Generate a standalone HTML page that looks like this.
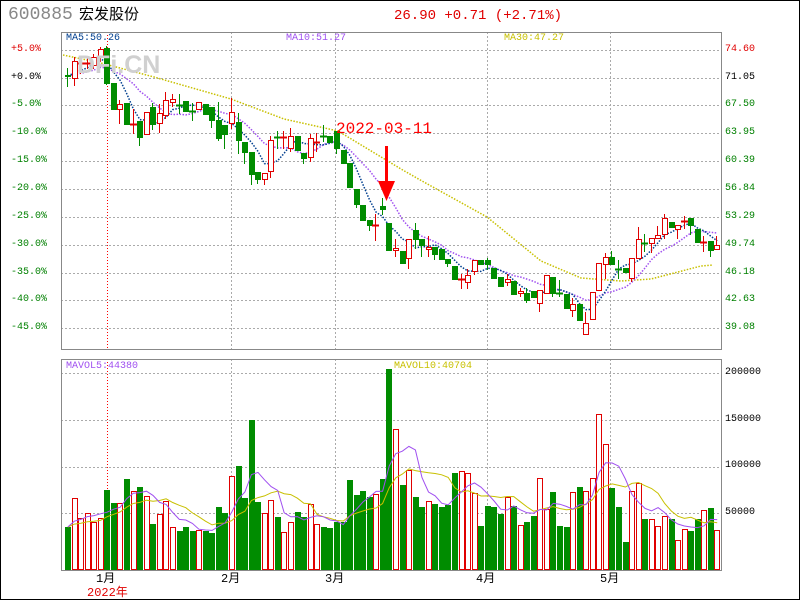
<!DOCTYPE html>
<html><head><meta charset="utf-8"><style>
html,body{margin:0;padding:0;background:#fff;}
#w{position:relative;width:798px;height:598px;border:1px solid #000;overflow:hidden;}
.t{position:absolute;white-space:nowrap;font-family:"Liberation Mono","Noto Sans CJK SC",monospace;font-size:10px;line-height:12px;}
svg{position:absolute;left:0;top:0;}
</style></head><body><div id="w">
<svg id="s" width="800" height="600" shape-rendering="crispEdges"></svg>
<div class="t" style="left:7px;top:3px;font-size:18px;line-height:22px;color:#888">600885</div>
<div class="t" style="left:78px;top:4px;font-size:15px;line-height:20px;color:#000;font-family:'Liberation Sans','Noto Sans CJK SC',sans-serif">宏发股份</div>
<div class="t" style="left:393px;top:6px;font-size:14px;line-height:18px;color:#e00000">26.90 +0.71 (+2.71%)</div>
<div class="t" style="left:65px;top:32px;color:#003f8f">MA5:50.26</div>
<div class="t" style="left:285px;top:32px;color:#a050f0">MA10:51.27</div>
<div class="t" style="left:503px;top:32px;color:#c8c000">MA30:47.27</div>
<div class="t" style="left:76px;top:50px;font-size:25px;line-height:28px;font-weight:bold;color:#d0d0d0;font-family:'Liberation Sans',sans-serif">DFi.CN</div>
<div class="t" style="left:335px;top:118px;font-size:16px;line-height:20px;color:#ff0000">2022-03-11</div>
<div class="t" style="left:65px;top:360px;color:#a050f0">MAVOL5:44380</div>
<div class="t" style="left:393px;top:360px;color:#c8c000">MAVOL10:40704</div>
<div class="t" style="left:95px;top:571px;font-size:12px;line-height:14px">1月</div>
<div class="t" style="left:220px;top:571px;font-size:12px;line-height:14px">2月</div>
<div class="t" style="left:324px;top:571px;font-size:12px;line-height:14px">3月</div>
<div class="t" style="left:475px;top:571px;font-size:12px;line-height:14px">4月</div>
<div class="t" style="left:599px;top:571px;font-size:12px;line-height:14px">5月</div>
<div class="t" style="left:86px;top:585px;font-size:12px;line-height:14px;color:#e00000">2022年</div>
<div class="t" style="left:10px;top:43px;color:#e00000">+5.0%</div>
<div class="t" style="left:10px;top:71px;color:#000">+0.0%</div>
<div class="t" style="left:10px;top:98px;color:#008000">-5.0%</div>
<div class="t" style="left:10px;top:126px;color:#008000">-10.0%</div>
<div class="t" style="left:10px;top:154px;color:#008000">-15.0%</div>
<div class="t" style="left:10px;top:182px;color:#008000">-20.0%</div>
<div class="t" style="left:10px;top:210px;color:#008000">-25.0%</div>
<div class="t" style="left:10px;top:238px;color:#008000">-30.0%</div>
<div class="t" style="left:10px;top:266px;color:#008000">-35.0%</div>
<div class="t" style="left:10px;top:293px;color:#008000">-40.0%</div>
<div class="t" style="left:10px;top:321px;color:#008000">-45.0%</div>
<div class="t" style="left:724px;top:43px;color:#e00000">74.60</div>
<div class="t" style="left:724px;top:71px;color:#000">71.05</div>
<div class="t" style="left:724px;top:98px;color:#008000">67.50</div>
<div class="t" style="left:724px;top:126px;color:#008000">63.95</div>
<div class="t" style="left:724px;top:154px;color:#008000">60.39</div>
<div class="t" style="left:724px;top:182px;color:#008000">56.84</div>
<div class="t" style="left:724px;top:210px;color:#008000">53.29</div>
<div class="t" style="left:724px;top:238px;color:#008000">49.74</div>
<div class="t" style="left:724px;top:266px;color:#008000">46.18</div>
<div class="t" style="left:724px;top:293px;color:#008000">42.63</div>
<div class="t" style="left:724px;top:321px;color:#008000">39.08</div>
<div class="t" style="left:724px;top:366px;color:#000">200000</div>
<div class="t" style="left:724px;top:413px;color:#000">150000</div>
<div class="t" style="left:724px;top:459px;color:#000">100000</div>
<div class="t" style="left:724px;top:506px;color:#000">50000</div>
</div>
<script>
var s=document.getElementById('s'),NS='http://www.w3.org/2000/svg';
function el(n,a){var e=document.createElementNS(NS,n);for(var k in a)e.setAttribute(k,a[k]);s.appendChild(e);return e;}
var G='#008c00',R='#e00000';
[49,77,104,132,160,188,216,244,272,299,327].forEach(function(y){el('line',{x1:60,x2:720,y1:y+.5,y2:y+.5,stroke:'#aaa','stroke-dasharray':'2,2'})});
[372,419,466,512].forEach(function(y){el('line',{x1:60,x2:720,y1:y+.5,y2:y+.5,stroke:'#aaa','stroke-dasharray':'2,2'})});
[230,334,486,609].forEach(function(x){el('line',{x1:x+.5,x2:x+.5,y1:31,y2:348,stroke:'#aaa','stroke-dasharray':'2,2'});el('line',{x1:x+.5,x2:x+.5,y1:358,y2:569,stroke:'#aaa','stroke-dasharray':'2,2'})});
el('line',{x1:106.5,x2:106.5,y1:31,y2:348,stroke:'#f00','stroke-dasharray':'1,2'});
el('line',{x1:106.5,x2:106.5,y1:358,y2:489,stroke:'#f00','stroke-dasharray':'1,2'});
el('rect',{x:60.5,y:31.5,width:660,height:317,fill:'none',stroke:'#888'});
el('rect',{x:60.5,y:358.5,width:660,height:211,fill:'none',stroke:'#888'});
var C=[['g',74,75,67,85],['r',60,77,56,84],['r',62,62,55,72],['r',62,62,56,67],['r',56,64,53,67],['r',48,55,46,60],['g',47,82,45,83],['g',82,108],['r',103,108,99,122],['g',102,123],['r',123,123,108,132],['g',120,136,120,144],['r',111,133],['g',106,123,102,128],['r',112,122,103,131],['r',99,114,91,117],['r',98,101,93,105],['g',104,104,93,112],['g',100,110],['g',110,110,102,119],['r',101,108],['g',103,113],['g',106,119,106,126],['g',119,137,101,139],['g',124,133,124,147],['r',111,122,97,127],['g',121,139,112,152],['g',141,151,141,162],['g',151,173,151,183],['g',171,178,171,182],['r',172,178,172,183],['r',139,170,135,176],['g',136,136,130,147],['r',136,136,130,147],['r',135,147,127,150],['g',135,149],['g',152,157,152,162],['r',137,156,133,160],['r',141,141,132,150],['g',135,135,124,140],['g',135,141],['g',130,147,130,152],['g',149,162],['g',162,186],['g',188,203,188,206],['g',204,219],['g',219,224,219,229],['r',224,224,213,239],['g',205,208,197,213],['g',222,249],['r',247,249,238,255],['g',250,262],['r',238,257,238,267],['g',229,238,222,247],['g',238,244,238,255],['r',246,248,235,255],['g',246,253,246,258],['g',248,258],['g',258,262,258,265],['g',265,278],['r',278,278,273,287],['r',274,281,268,287],['r',259,270,259,273],['g',259,263],['g',259,263,257,268],['g',267,277],['g',276,285],['r',278,281,273,284],['g',280,293],['r',290,292,287,295],['g',292,299,287,301],['g',290,296],['r',289,302,289,310],['r',274,292],['g',276,292,276,295],['g',292,292,279,295],['g',293,307],['r',303,309,297,315],['g',303,319],['r',322,333,311,333],['r',291,318],['r',262,289],['r',256,263,252,277],['g',256,263,250,263],['g',268,268,259,277],['g',267,271],['r',257,277,257,280],['r',238,257,226,257],['g',242,242,233,250],['r',237,242,237,251],['r',234,237,225,237],['r',217,233,213,237],['g',221,226],['r',224,228,224,237],['r',220,220,215,227],['g',217,224,217,233],['g',228,241],['r',241,241,235,250],['g',240,249,240,255],['r',244,248,235,248]];
var V='g526 r497 r517 r512 r521 r517 g489 g502 r502 g478 r490 g486 r495 g523 r513 r500 r526 g530 g526 g530 r529 g530 g532 g506 g512 r475 g465 g497 g419 g501 r512 r499 g516 r531 r521 g511 g516 r503 r523 g526 g527 g521 g521 g479 g494 g490 g496 r493 g478 g368 r428 g484 r469 g496 g506 r500 g503 g506 g504 g472 r470 r472 r492 g525 g505 g506 g513 r496 g505 r524 g521 g515 r477 r508 g491 g525 g526 r491 g486 r490 r477 r413 r443 g487 g506 g541 r490 r482 g518 r518 r525 r515 g518 r539 r528 g530 g518 r509 g507 r529'.split(' ');
function X(i){return 64+i*6.56;}
el('polyline',{points:'62,54 100,62 153,76 230,98 283,118 337,130 400,168 421,180 486,216 540,260 580,277 620,280 650,278 700,265 712,264',fill:'none',stroke:'#c8c000','stroke-dasharray':'1.5,1.5','stroke-width':1.5,'shape-rendering':'auto'});
var cl=C.map(function(c){return c[0]=='r'?c[1]:c[2]});
function ma(a,n){return a.map(function(v,i){var s=0,k=0;for(var j=Math.max(0,i-n+1);j<=i;j++){s+=a[j];k++;}while(k<n){s+=a[0];k++;}return s/n;});}
function pl(a,col,dash,sw){el('polyline',{points:a.map(function(v,i){return (X(i)+2.75).toFixed(1)+','+v.toFixed(1)}).join(' '),fill:'none',stroke:col,'stroke-dasharray':dash,'stroke-width':sw||1,'shape-rendering':'auto'});}
pl(ma(cl,10),'#a050f0','1.5,1.5',1.5);pl(ma(cl,5),'#003f8f','1.5,1.5',1.5);
C.forEach(function(c,i){var x=X(i),col=c[0]=='r'?R:G,cx=Math.round(x+2)+.5;var wt=c[3]||c[1],wb=c[4]||c[2];
el('line',{x1:cx,x2:cx,y1:wt,y2:wb+1,stroke:col});
var h=c[2]-c[1];
if(h<1){el('line',{x1:Math.round(x)-1,x2:Math.round(x)+6,y1:c[1]+.5,y2:c[1]+.5,stroke:col,'stroke-width':2});}
else if(c[0]=='r'){el('rect',{x:Math.round(x)+.5,y:c[1]+.5,width:5,height:h,fill:'#fff',stroke:col,'stroke-width':1.3});}
else el('rect',{x:Math.round(x),y:c[1],width:6,height:h+1,fill:col});});
el('line',{x1:385.5,x2:385.5,y1:145,y2:190,stroke:'#f00','stroke-width':3});
el('polygon',{points:'377,180 394,180 385.5,200',fill:'#f00','shape-rendering':'auto'});
var vt=V.map(function(v){return +v.slice(1)});
V.forEach(function(v,i){var x=Math.round(X(i)),t=+v.slice(1);
if(v[0]=='r')el('rect',{x:x+.5,y:t+.5,width:5,height:569-t-1,fill:'#fff',stroke:R,'stroke-width':1.3});
else el('rect',{x:x,y:t,width:6,height:569-t,fill:G});});
pl(ma(vt,10),'#c8c000','');pl(ma(vt,5),'#a050f0','');
</script>
</body></html>
